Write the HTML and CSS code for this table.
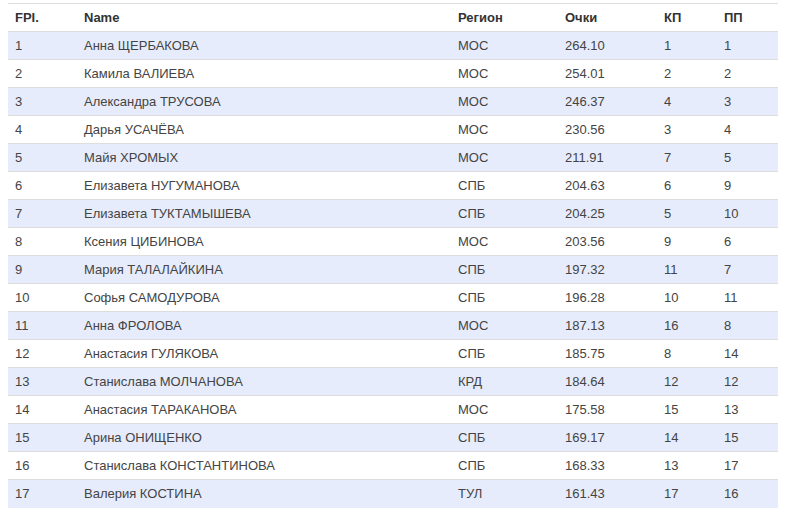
FILE: index.html
```html
<!DOCTYPE html>
<html>
<head>
<meta charset="utf-8">
<link rel="stylesheet" href="styles.css">
</head>
<body>
<table class="results">
<colgroup>
<col class="c-fpi"><col class="c-name"><col class="c-reg"><col class="c-pts"><col class="c-kp"><col class="c-pp">
</colgroup>
<thead>
<tr><th>FPI.</th><th>Name</th><th>Регион</th><th>Очки</th><th>КП</th><th>ПП</th></tr>
</thead>
<tbody>
<tr><td>1</td><td>Анна ЩЕРБАКОВА</td><td>МОС</td><td>264.10</td><td>1</td><td>1</td></tr>
<tr><td>2</td><td>Камила ВАЛИЕВА</td><td>МОС</td><td>254.01</td><td>2</td><td>2</td></tr>
<tr><td>3</td><td>Александра ТРУСОВА</td><td>МОС</td><td>246.37</td><td>4</td><td>3</td></tr>
<tr><td>4</td><td>Дарья УСАЧЁВА</td><td>МОС</td><td>230.56</td><td>3</td><td>4</td></tr>
<tr><td>5</td><td>Майя ХРОМЫХ</td><td>МОС</td><td>211.91</td><td>7</td><td>5</td></tr>
<tr><td>6</td><td>Елизавета НУГУМАНОВА</td><td>СПБ</td><td>204.63</td><td>6</td><td>9</td></tr>
<tr><td>7</td><td>Елизавета ТУКТАМЫШЕВА</td><td>СПБ</td><td>204.25</td><td>5</td><td>10</td></tr>
<tr><td>8</td><td>Ксения ЦИБИНОВА</td><td>МОС</td><td>203.56</td><td>9</td><td>6</td></tr>
<tr><td>9</td><td>Мария ТАЛАЛАЙКИНА</td><td>СПБ</td><td>197.32</td><td>11</td><td>7</td></tr>
<tr><td>10</td><td>Софья САМОДУРОВА</td><td>СПБ</td><td>196.28</td><td>10</td><td>11</td></tr>
<tr><td>11</td><td>Анна ФРОЛОВА</td><td>МОС</td><td>187.13</td><td>16</td><td>8</td></tr>
<tr><td>12</td><td>Анастасия ГУЛЯКОВА</td><td>СПБ</td><td>185.75</td><td>8</td><td>14</td></tr>
<tr><td>13</td><td>Станислава МОЛЧАНОВА</td><td>КРД</td><td>184.64</td><td>12</td><td>12</td></tr>
<tr><td>14</td><td>Анастасия ТАРАКАНОВА</td><td>МОС</td><td>175.58</td><td>15</td><td>13</td></tr>
<tr><td>15</td><td>Арина ОНИЩЕНКО</td><td>СПБ</td><td>169.17</td><td>14</td><td>15</td></tr>
<tr><td>16</td><td>Станислава КОНСТАНТИНОВА</td><td>СПБ</td><td>168.33</td><td>13</td><td>17</td></tr>
<tr><td>17</td><td>Валерия КОСТИНА</td><td>ТУЛ</td><td>161.43</td><td>17</td><td>16</td></tr>
</tbody>
</table>
</body>
</html>
```
FILE: styles.css
```css
html, body {
  margin: 0;
  padding: 0;
  background: #fff;
}
body {
  padding: 3px 8px 0 8px;
  font-family: "Liberation Sans", Arial, sans-serif;
  font-size: 13px;
  color: #444;
}
.results {
  width: 770px;
  border-collapse: collapse;
  table-layout: fixed;
}
.c-fpi { width: 69px; }
.c-name { width: 374px; }
.c-reg { width: 107px; }
.c-pts { width: 99px; }
.c-kp { width: 60px; }
.c-pp { width: 61px; }
.results th,
.results td {
  height: 28px;
  padding: 0 7px;
  text-align: left;
  border-top: 1px solid #dddddd;
  vertical-align: middle;
  line-height: 15px;
  box-sizing: border-box;
}
.results th {
  font-weight: bold;
  color: #333;
}
.results td {
  color: #444;
}
.results tbody tr:nth-child(odd) td {
  background: #e7ecfc;
}
```
